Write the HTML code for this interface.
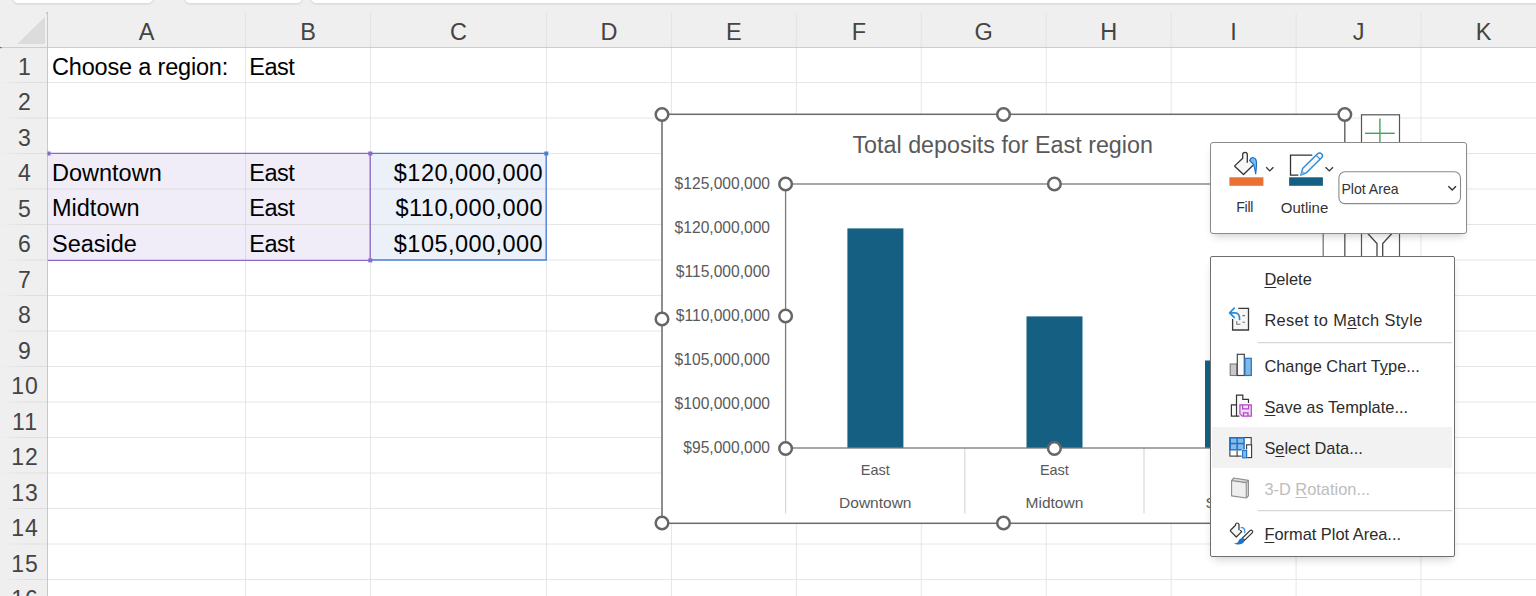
<!DOCTYPE html><html><head><meta charset="utf-8"><style>
*{box-sizing:border-box;margin:0;padding:0}
html,body{width:1536px;height:596px;overflow:hidden;background:#fff;font-family:"Liberation Sans", sans-serif}
.a{position:absolute}
.t{position:absolute;white-space:nowrap;line-height:1}
</style></head><body>
<div class="a" style="left:0;top:0;width:1536px;height:47px;background:#efefef"></div><div class="a" style="left:0;top:47px;width:47px;height:549px;background:#efefef"></div><div class="a" style="left:12px;top:-20px;width:142px;height:24px;background:#fff;border:1px solid #dedede;border-radius:6px;box-shadow:0 1px 1px rgba(0,0,0,0.06)"></div><div class="a" style="left:184px;top:-20px;width:119px;height:24px;background:#fff;border:1px solid #dedede;border-radius:6px;box-shadow:0 1px 1px rgba(0,0,0,0.06)"></div><div class="a" style="left:310px;top:-20px;width:1250px;height:24px;background:#fff;border:1px solid #dedede;border-radius:6px;box-shadow:0 1px 1px rgba(0,0,0,0.06)"></div><svg class="a" style="left:0;top:0" width="48" height="48"><polygon points="17,44 45,44 45,17" fill="#dcdcdc"/><rect x="46.5" y="12.5" width="1.2" height="1.2" fill="#777"/></svg><svg class="a" style="left:0;top:0" width="1536" height="596"><defs><linearGradient id="rg" gradientUnits="userSpaceOnUse" x1="0" y1="0" x2="47" y2="0"><stop offset="0" stop-color="#efefef"/><stop offset="0.5" stop-color="#e0e0e0"/><stop offset="1" stop-color="#dedede"/></linearGradient></defs><line x1="48" y1="82.5" x2="1536" y2="82.5" stroke="#e6e6e6" stroke-width="1"/><line x1="0" y1="82.5" x2="47" y2="82.5" stroke="url(#rg)" stroke-width="1"/><line x1="48" y1="118.0" x2="1536" y2="118.0" stroke="#e6e6e6" stroke-width="1"/><line x1="0" y1="118.0" x2="47" y2="118.0" stroke="url(#rg)" stroke-width="1"/><line x1="48" y1="153.5" x2="1536" y2="153.5" stroke="#e6e6e6" stroke-width="1"/><line x1="0" y1="153.5" x2="47" y2="153.5" stroke="url(#rg)" stroke-width="1"/><line x1="48" y1="189.0" x2="1536" y2="189.0" stroke="#e6e6e6" stroke-width="1"/><line x1="0" y1="189.0" x2="47" y2="189.0" stroke="url(#rg)" stroke-width="1"/><line x1="48" y1="224.5" x2="1536" y2="224.5" stroke="#e6e6e6" stroke-width="1"/><line x1="0" y1="224.5" x2="47" y2="224.5" stroke="url(#rg)" stroke-width="1"/><line x1="48" y1="260.0" x2="1536" y2="260.0" stroke="#e6e6e6" stroke-width="1"/><line x1="0" y1="260.0" x2="47" y2="260.0" stroke="url(#rg)" stroke-width="1"/><line x1="48" y1="295.5" x2="1536" y2="295.5" stroke="#e6e6e6" stroke-width="1"/><line x1="0" y1="295.5" x2="47" y2="295.5" stroke="url(#rg)" stroke-width="1"/><line x1="48" y1="331.0" x2="1536" y2="331.0" stroke="#e6e6e6" stroke-width="1"/><line x1="0" y1="331.0" x2="47" y2="331.0" stroke="url(#rg)" stroke-width="1"/><line x1="48" y1="366.5" x2="1536" y2="366.5" stroke="#e6e6e6" stroke-width="1"/><line x1="0" y1="366.5" x2="47" y2="366.5" stroke="url(#rg)" stroke-width="1"/><line x1="48" y1="402.0" x2="1536" y2="402.0" stroke="#e6e6e6" stroke-width="1"/><line x1="0" y1="402.0" x2="47" y2="402.0" stroke="url(#rg)" stroke-width="1"/><line x1="48" y1="437.5" x2="1536" y2="437.5" stroke="#e6e6e6" stroke-width="1"/><line x1="0" y1="437.5" x2="47" y2="437.5" stroke="url(#rg)" stroke-width="1"/><line x1="48" y1="473.0" x2="1536" y2="473.0" stroke="#e6e6e6" stroke-width="1"/><line x1="0" y1="473.0" x2="47" y2="473.0" stroke="url(#rg)" stroke-width="1"/><line x1="48" y1="508.5" x2="1536" y2="508.5" stroke="#e6e6e6" stroke-width="1"/><line x1="0" y1="508.5" x2="47" y2="508.5" stroke="url(#rg)" stroke-width="1"/><line x1="48" y1="544.0" x2="1536" y2="544.0" stroke="#e6e6e6" stroke-width="1"/><line x1="0" y1="544.0" x2="47" y2="544.0" stroke="url(#rg)" stroke-width="1"/><line x1="48" y1="579.5" x2="1536" y2="579.5" stroke="#e6e6e6" stroke-width="1"/><line x1="0" y1="579.5" x2="47" y2="579.5" stroke="url(#rg)" stroke-width="1"/><line x1="48" y1="615.0" x2="1536" y2="615.0" stroke="#e6e6e6" stroke-width="1"/><line x1="0" y1="615.0" x2="47" y2="615.0" stroke="url(#rg)" stroke-width="1"/><line x1="245.5" y1="48" x2="245.5" y2="596" stroke="#e6e6e6" stroke-width="1"/><line x1="245.5" y1="13" x2="245.5" y2="47" stroke="#e3e3e3" stroke-width="1"/><line x1="370.5" y1="48" x2="370.5" y2="596" stroke="#e6e6e6" stroke-width="1"/><line x1="370.5" y1="13" x2="370.5" y2="47" stroke="#e3e3e3" stroke-width="1"/><line x1="546.5" y1="48" x2="546.5" y2="596" stroke="#e6e6e6" stroke-width="1"/><line x1="546.5" y1="13" x2="546.5" y2="47" stroke="#e3e3e3" stroke-width="1"/><line x1="671.4300000000001" y1="48" x2="671.4300000000001" y2="596" stroke="#e6e6e6" stroke-width="1"/><line x1="671.4300000000001" y1="13" x2="671.4300000000001" y2="47" stroke="#e3e3e3" stroke-width="1"/><line x1="796.36" y1="48" x2="796.36" y2="596" stroke="#e6e6e6" stroke-width="1"/><line x1="796.36" y1="13" x2="796.36" y2="47" stroke="#e3e3e3" stroke-width="1"/><line x1="921.29" y1="48" x2="921.29" y2="596" stroke="#e6e6e6" stroke-width="1"/><line x1="921.29" y1="13" x2="921.29" y2="47" stroke="#e3e3e3" stroke-width="1"/><line x1="1046.22" y1="48" x2="1046.22" y2="596" stroke="#e6e6e6" stroke-width="1"/><line x1="1046.22" y1="13" x2="1046.22" y2="47" stroke="#e3e3e3" stroke-width="1"/><line x1="1171.15" y1="48" x2="1171.15" y2="596" stroke="#e6e6e6" stroke-width="1"/><line x1="1171.15" y1="13" x2="1171.15" y2="47" stroke="#e3e3e3" stroke-width="1"/><line x1="1296.08" y1="48" x2="1296.08" y2="596" stroke="#e6e6e6" stroke-width="1"/><line x1="1296.08" y1="13" x2="1296.08" y2="47" stroke="#e3e3e3" stroke-width="1"/><line x1="1421.01" y1="48" x2="1421.01" y2="596" stroke="#e6e6e6" stroke-width="1"/><line x1="1421.01" y1="13" x2="1421.01" y2="47" stroke="#e3e3e3" stroke-width="1"/><line x1="0" y1="47.5" x2="1536" y2="47.5" stroke="#cdcdcd" stroke-width="1"/><line x1="47.5" y1="13" x2="47.5" y2="596" stroke="#c8c8c8" stroke-width="1"/><rect x="0" y="47" width="1.5" height="1.2" fill="#666"/></svg><div class="t" style="left:106.5px;width:80px;text-align:center;top:21px;font-size:23.5px;color:#444">A</div><div class="t" style="left:268.0px;width:80px;text-align:center;top:21px;font-size:23.5px;color:#444">B</div><div class="t" style="left:418.5px;width:80px;text-align:center;top:21px;font-size:23.5px;color:#444">C</div><div class="t" style="left:568.965px;width:80px;text-align:center;top:21px;font-size:23.5px;color:#444">D</div><div class="t" style="left:693.895px;width:80px;text-align:center;top:21px;font-size:23.5px;color:#444">E</div><div class="t" style="left:818.825px;width:80px;text-align:center;top:21px;font-size:23.5px;color:#444">F</div><div class="t" style="left:943.755px;width:80px;text-align:center;top:21px;font-size:23.5px;color:#444">G</div><div class="t" style="left:1068.685px;width:80px;text-align:center;top:21px;font-size:23.5px;color:#444">H</div><div class="t" style="left:1193.615px;width:80px;text-align:center;top:21px;font-size:23.5px;color:#444">I</div><div class="t" style="left:1318.545px;width:80px;text-align:center;top:21px;font-size:23.5px;color:#444">J</div><div class="t" style="left:1443.475px;width:80px;text-align:center;top:21px;font-size:23.5px;color:#444">K</div><div class="t" style="left:0;width:47px;text-align:center;top:55.5px;font-size:23px;color:#444;letter-spacing:1px;padding-left:3px">1</div><div class="t" style="left:0;width:47px;text-align:center;top:91.0px;font-size:23px;color:#444;letter-spacing:1px;padding-left:3px">2</div><div class="t" style="left:0;width:47px;text-align:center;top:126.5px;font-size:23px;color:#444;letter-spacing:1px;padding-left:3px">3</div><div class="t" style="left:0;width:47px;text-align:center;top:162.0px;font-size:23px;color:#444;letter-spacing:1px;padding-left:3px">4</div><div class="t" style="left:0;width:47px;text-align:center;top:197.5px;font-size:23px;color:#444;letter-spacing:1px;padding-left:3px">5</div><div class="t" style="left:0;width:47px;text-align:center;top:233.0px;font-size:23px;color:#444;letter-spacing:1px;padding-left:3px">6</div><div class="t" style="left:0;width:47px;text-align:center;top:268.5px;font-size:23px;color:#444;letter-spacing:1px;padding-left:3px">7</div><div class="t" style="left:0;width:47px;text-align:center;top:304.0px;font-size:23px;color:#444;letter-spacing:1px;padding-left:3px">8</div><div class="t" style="left:0;width:47px;text-align:center;top:339.5px;font-size:23px;color:#444;letter-spacing:1px;padding-left:3px">9</div><div class="t" style="left:0;width:47px;text-align:center;top:375.0px;font-size:23px;color:#444;letter-spacing:1px;padding-left:3px">10</div><div class="t" style="left:0;width:47px;text-align:center;top:410.5px;font-size:23px;color:#444;letter-spacing:1px;padding-left:3px">11</div><div class="t" style="left:0;width:47px;text-align:center;top:446.0px;font-size:23px;color:#444;letter-spacing:1px;padding-left:3px">12</div><div class="t" style="left:0;width:47px;text-align:center;top:481.5px;font-size:23px;color:#444;letter-spacing:1px;padding-left:3px">13</div><div class="t" style="left:0;width:47px;text-align:center;top:517.0px;font-size:23px;color:#444;letter-spacing:1px;padding-left:3px">14</div><div class="t" style="left:0;width:47px;text-align:center;top:552.5px;font-size:23px;color:#444;letter-spacing:1px;padding-left:3px">15</div><div class="t" style="left:0;width:47px;text-align:center;top:588.0px;font-size:23px;color:#444;letter-spacing:1px;padding-left:3px">16</div><div class="a" style="left:48px;top:154px;width:322px;height:106px;background:#f0edf8"></div><div class="a" style="left:371px;top:154px;width:175px;height:106px;background:#ebf0f9"></div><svg class="a" style="left:0;top:0" width="600" height="300"><line x1="48" y1="189" x2="546" y2="189" stroke="#dcdcdc"/><line x1="48" y1="224.5" x2="546" y2="224.5" stroke="#dcdcdc"/><line x1="245.5" y1="154" x2="245.5" y2="260" stroke="#dcdcdc"/><path d="M48 153.3 H370.2 V260.4 H48" fill="none" stroke="#8c69c8" stroke-width="1.35"/><path d="M372 153.3 H546.2 V260 H372" fill="none" stroke="#4a7fd4" stroke-width="1.35"/><rect x="368.3" y="151.5" width="4" height="4" fill="#8c69c8"/><rect x="368.3" y="258.4" width="4" height="4" fill="#8c69c8"/><rect x="47.5" y="151.5" width="3" height="4" fill="#8c69c8"/><rect x="544.3" y="151.5" width="4" height="4" fill="#4a7fd4"/></svg><div class="t" style="left:52px;top:55.91px;font-size:23.5px;color:#000;letter-spacing:-0.18px">Choose a region:</div><div class="t" style="left:249.3px;top:55.91px;font-size:23.5px;color:#000;letter-spacing:-0.5px">East</div><div class="t" style="left:52px;top:161.61px;font-size:23.5px;color:#000">Downtown</div><div class="t" style="left:249.3px;top:161.61px;font-size:23.5px;color:#000;letter-spacing:-0.5px">East</div><div class="t" style="right:993px;top:161.61px;font-size:23.5px;color:#000;letter-spacing:0.45px">$120,000,000</div><div class="t" style="left:52px;top:197.11px;font-size:23.5px;color:#000">Midtown</div><div class="t" style="left:249.3px;top:197.11px;font-size:23.5px;color:#000;letter-spacing:-0.5px">East</div><div class="t" style="right:993px;top:197.11px;font-size:23.5px;color:#000;letter-spacing:0.45px">$110,000,000</div><div class="t" style="left:52px;top:232.61px;font-size:23.5px;color:#000">Seaside</div><div class="t" style="left:249.3px;top:232.61px;font-size:23.5px;color:#000;letter-spacing:-0.5px">East</div><div class="t" style="right:993px;top:232.61px;font-size:23.5px;color:#000;letter-spacing:0.45px">$105,000,000</div><div class="a" style="left:662px;top:114px;width:683px;height:409px;background:#fff"></div><svg class="a" style="left:0;top:0" width="1536" height="596"><line x1="785.6" y1="448" x2="785.6" y2="513.5" stroke="#d9d9d9" stroke-width="1.2"/><line x1="964.8" y1="448" x2="964.8" y2="513.5" stroke="#d9d9d9" stroke-width="1.2"/><line x1="1144.0" y1="448" x2="1144.0" y2="513.5" stroke="#d9d9d9" stroke-width="1.2"/><line x1="1323.2" y1="448" x2="1323.2" y2="513.5" stroke="#d9d9d9" stroke-width="1.2"/><rect x="847.4" y="228.4" width="56" height="219.6" fill="#156082"/><rect x="1026.5" y="316.4" width="56" height="131.60000000000002" fill="#156082"/><rect x="1205" y="360.5" width="56" height="87.5" fill="#156082"/><rect x="785.6" y="184" width="537.6" height="264" fill="none" stroke="#7a7a7a" stroke-width="1.3"/><rect x="662" y="114.3" width="682.8" height="409" fill="none" stroke="#6a6a6a" stroke-width="1.5"/><circle cx="662" cy="114.5" r="6.3" fill="#fff" stroke="#666" stroke-width="2.5"/><circle cx="1003.5" cy="114.5" r="6.3" fill="#fff" stroke="#666" stroke-width="2.5"/><circle cx="1344.8" cy="114.5" r="6.3" fill="#fff" stroke="#666" stroke-width="2.5"/><circle cx="662" cy="319" r="6.3" fill="#fff" stroke="#666" stroke-width="2.5"/><circle cx="662" cy="523" r="6.3" fill="#fff" stroke="#666" stroke-width="2.5"/><circle cx="1003.5" cy="523" r="6.3" fill="#fff" stroke="#666" stroke-width="2.5"/><circle cx="785.6" cy="184" r="6.3" fill="#fff" stroke="#666" stroke-width="2.5"/><circle cx="1054.4" cy="184" r="6.3" fill="#fff" stroke="#666" stroke-width="2.5"/><circle cx="785.6" cy="316" r="6.3" fill="#fff" stroke="#666" stroke-width="2.5"/><circle cx="785.6" cy="448.5" r="6.3" fill="#fff" stroke="#666" stroke-width="2.5"/><circle cx="1054.4" cy="448.5" r="6.3" fill="#fff" stroke="#666" stroke-width="2.5"/></svg><div class="t" style="left:702.7px;width:600px;text-align:center;top:133.88px;font-size:23.3px;color:#595959">Total deposits for East region</div><div class="t" style="right:766px;top:176.49px;font-size:15.6px;color:#595959">$125,000,000</div><div class="t" style="right:766px;top:220.49px;font-size:15.6px;color:#595959">$120,000,000</div><div class="t" style="right:766px;top:264.49px;font-size:15.6px;color:#595959">$115,000,000</div><div class="t" style="right:766px;top:308.49px;font-size:15.6px;color:#595959">$110,000,000</div><div class="t" style="right:766px;top:352.49px;font-size:15.6px;color:#595959">$105,000,000</div><div class="t" style="right:766px;top:396.49px;font-size:15.6px;color:#595959">$100,000,000</div><div class="t" style="right:766px;top:440.49px;font-size:15.6px;color:#595959">$95,000,000</div><div class="t" style="left:575.3px;width:600px;text-align:center;top:463.03px;font-size:14.5px;color:#595959">East</div><div class="t" style="left:575.3px;width:600px;text-align:center;top:495.28px;font-size:15.5px;color:#595959">Downtown</div><div class="t" style="left:754.4000000000001px;width:600px;text-align:center;top:463.03px;font-size:14.5px;color:#595959">East</div><div class="t" style="left:754.4000000000001px;width:600px;text-align:center;top:495.28px;font-size:15.5px;color:#595959">Midtown</div><div class="t" style="left:933.5999999999999px;width:600px;text-align:center;top:463.03px;font-size:14.5px;color:#595959">East</div><div class="t" style="left:933.5999999999999px;width:600px;text-align:center;top:495.28px;font-size:15.5px;color:#595959">Seaside</div><svg class="a" style="left:0;top:0" width="1536" height="596"><rect x="1361.5" y="114.8" width="38" height="150" fill="#fff" stroke="#555" stroke-width="1.2"/><line x1="1365" y1="133.3" x2="1394.7" y2="133.3" stroke="#3ea559" stroke-width="1.4"/><line x1="1379.9" y1="118.6" x2="1379.9" y2="148" stroke="#3ea559" stroke-width="1.4"/><path d="M1367.3 233 L1377 243.6 V256 M1392.4 233 L1382.7 243.6 V256" fill="none" stroke="#444" stroke-width="1.3"/></svg><div class="a" style="left:1209.7px;top:142.2px;width:257px;height:92px;background:#fff;border:1.2px solid #8a8a8a;border-radius:3px;box-shadow:0 5px 8px -3px rgba(0,0,0,0.2)"></div><svg class="a" style="left:0;top:0" width="1536" height="596"><path d="M1234.4 166.1 L1243.5 174.5 L1254.1 164.3 L1248.8 159.3 L1247.3 160.7 V154.6 A2.3 2.3 0 0 0 1242.7 154.6 V158.2 Z" fill="#f7f7f7" stroke="none" stroke="#333" stroke-width="1.3" stroke-linejoin="round"/><path d="M1234.4 166.1 L1242.7 158.2 V154.6 A2.3 2.3 0 0 1 1247.3 154.6 V162.7 M1234.4 166.1 L1243.5 174.5 L1254.1 164.3 L1249.6 160.1" fill="none" stroke="#333" stroke-width="1.3" stroke-linejoin="round"/><path d="M1249.8 160.5 C1251 156.5 1255.8 156.8 1256.4 161.5 C1256.8 165 1256.2 169 1255.7 173.8 C1254.8 169 1254.3 166.5 1253.5 164.4 Z" fill="#7dbbef" stroke="#1b73c9" stroke-width="1.2" stroke-linejoin="round"/><rect x="1229.4" y="177.3" width="34" height="8.5" fill="#e97132"/><path d="M1266.2 167.3 L1269.8 170.9 L1273.4 167.3" fill="none" stroke="#333" stroke-width="1.3"/><path d="M1312.3 155.1 H1290.5 V175.2 H1298.4" fill="none" stroke="#333" stroke-width="1.3"/><path d="M1300.8 175.2 L1302.6 168.6 L1317.6 153.8 A2.6 2.6 0 0 1 1321.6 157.8 L1306.6 172.6 Z" fill="#f7f7f7" stroke="#2b8ad6" stroke-width="1.4" stroke-linejoin="round"/><path d="M1300.8 175.2 L1302.2 170.2 L1304.6 172.8 Z" fill="#7dbbef"/><line x1="1316.2" y1="155.4" x2="1320" y2="159.2" stroke="#2b8ad6" stroke-width="1.2"/><rect x="1289.1" y="177.3" width="33.8" height="8.5" fill="#156082"/><path d="M1325.6 167.3 L1329.3 170.9 L1333 167.3" fill="none" stroke="#333" stroke-width="1.3"/><rect x="1338.9" y="171.8" width="121.6" height="31.8" rx="6" fill="#fff" stroke="#8a8a8a" stroke-width="1.1"/><path d="M1448.4 186.2 L1452.2 190 L1456 186.2" fill="none" stroke="#333" stroke-width="1.4"/></svg><div class="t" style="left:944.7px;width:600px;text-align:center;top:200.18px;font-size:14.2px;color:#333;letter-spacing:-0.3px">Fill</div><div class="t" style="left:1004.5px;width:600px;text-align:center;top:199.50px;font-size:15px;color:#333">Outline</div><div class="t" style="left:1341.4px;top:181.96px;font-size:14.1px;color:#333">Plot Area</div><div class="a" style="left:1210px;top:255.9px;width:244.5px;height:301px;background:#fff;border:1.2px solid #6e6e6e;border-radius:2px;box-shadow:0 5px 9px -3px rgba(0,0,0,0.2)"></div><div class="a" style="left:1212px;top:427.2px;width:240px;height:40.4px;background:#f2f2f2"></div><svg class="a" style="left:0;top:0" width="1536" height="596"><line x1="1258" y1="342.6" x2="1452" y2="342.6" stroke="#d6d6d6" stroke-width="1.2"/><line x1="1257.6" y1="510.7" x2="1452" y2="510.7" stroke="#d6d6d6" stroke-width="1.2"/><path d="M1238.3 308.4 H1248.5 V330 H1232.6 V319" fill="#f6f6f6" stroke="#3a3a3a" stroke-width="1.3"/><path d="M1242.4 315.6 H1245 M1242.4 322.3 H1245 M1236.8 321 V324.2 H1240.4" fill="none" stroke="#777" stroke-width="1.1"/><path d="M1234.2 308.2 L1229.6 312.8 L1234.2 317.4 M1229.8 312.8 H1235 C1238 312.8 1239.8 315 1239.6 319.4" fill="none" stroke="#2b8ad6" stroke-width="1.7" stroke-linecap="round" stroke-linejoin="round"/><rect x="1230.2" y="364" width="6.6" height="11.5" fill="#c9c9c9" stroke="#7a7a7a" stroke-width="1.1"/><rect x="1237.3" y="354.3" width="7" height="21.2" fill="#fafafa" stroke="#444" stroke-width="1.2"/><rect x="1244.9" y="358.3" width="6.4" height="17.2" fill="#80b8ea" stroke="#1f73c4" stroke-width="1.2"/><path d="M1239.4 416.2 H1231.4 V404.8 H1236.5 V395.1 H1242.8 V399.4 H1248.5 V403" fill="#fafafa" stroke="#333" stroke-width="1.2"/><line x1="1236.5" y1="404.8" x2="1236.5" y2="416.2" stroke="#333" stroke-width="1.2"/><path d="M1239.9 404.9 H1251.3 V416.1 H1242.2 L1239.9 413.8 Z" fill="#f3dcf7" stroke="#b146c2" stroke-width="1.2"/><path d="M1242.6 404.9 V408.8 H1248.6 V404.9 M1243.4 416 V412.8 H1248 V416" fill="none" stroke="#b146c2" stroke-width="1.2"/><rect x="1229.9" y="437.6" width="21.3" height="18.5" fill="#fff" stroke="#3a3a3a" stroke-width="1.1"/><rect x="1229.4" y="437.1" width="15.4" height="13.4" fill="#1f73c4"/><rect x="1231" y="438.6" width="5.4" height="4.2" fill="#86bcec"/><rect x="1237.9" y="438.6" width="5.4" height="4.2" fill="#86bcec"/><rect x="1231" y="444.3" width="5.4" height="4.8" fill="#86bcec"/><rect x="1237.9" y="444.3" width="5.4" height="4.8" fill="#86bcec"/><line x1="1237.1" y1="450.5" x2="1237.1" y2="456.5" stroke="#3a3a3a" stroke-width="1.1"/><rect x="1246.6" y="444.8" width="5" height="12.8" fill="#fff" stroke="#3a3a3a" stroke-width="1.1"/><rect x="1241.6" y="449.3" width="5.6" height="9.2" fill="#f2f2f2"/><rect x="1242.6" y="450.4" width="3.9" height="7.4" fill="#86bcec" stroke="#1f73c4" stroke-width="1.1"/><path d="M1231.6 480.6 L1233.8 478 L1248.4 480.4 V495.8 L1246.2 498 L1231.6 495.8 Z" fill="#dedede" stroke="#8f8f8f" stroke-width="1.2" stroke-linejoin="round"/><path d="M1231.6 480.6 L1246.2 482.6 V498 M1246.2 482.6 L1248.4 480.4" fill="none" stroke="#8f8f8f" stroke-width="1.1"/><path d="M1232.4 481.6 L1245.4 483.4 V497 L1232.4 495 Z" fill="#efefef"/><path d="M1230 530.7 L1236.3 537 L1241.7 531.6 L1239 528.9 V524.4 A1.8 1.8 0 0 0 1235.5 524.4 V525.4 Z" fill="#f7f7f7" stroke="none" stroke-width="1.2" stroke-linejoin="round"/><path d="M1230 530.7 L1235.5 525.3 V524.4 A1.8 1.8 0 0 1 1239 524.4 V530.2 M1230 530.7 L1236.3 537 L1241.7 531.6 L1240.2 530.1" fill="none" stroke="#333" stroke-width="1.2" stroke-linejoin="round"/><path d="M1241.3 527.6 C1243.5 527 1245.5 529.5 1244.6 532.6" fill="none" stroke="#4a9be0" stroke-width="1.5" stroke-linecap="round"/><path d="M1242.2 538.2 L1250 530.6 A1.4 1.4 0 0 1 1252.2 532.8 L1244.4 540.4 Z" fill="#fafafa" stroke="#333" stroke-width="1.2" stroke-linejoin="round"/><path d="M1242.6 538 C1240 537.8 1238.6 540.2 1238 542 C1237 543.2 1235.5 543.4 1233.8 543.2 C1236.6 545 1241.4 545 1243.6 542.6 C1244.6 541.4 1244.6 539.6 1244.2 539.4 Z" fill="#1f73c4"/></svg><div class="t" style="left:1264.4px;top:271.42px;font-size:16.4px;color:#2b2b2b;text-decoration-thickness:1px;text-underline-offset:2px"><u>D</u>elete</div><div class="t" style="left:1264.4px;top:312.12px;font-size:16.4px;color:#2b2b2b;letter-spacing:0.35px;text-decoration-thickness:1px;text-underline-offset:2px">Reset to M<u>a</u>tch Style</div><div class="t" style="left:1264.4px;top:358.12px;font-size:16.4px;color:#2b2b2b;text-decoration-thickness:1px;text-underline-offset:2px">Change Chart T<u>y</u>pe...</div><div class="t" style="left:1264.4px;top:398.92px;font-size:16.4px;color:#2b2b2b;text-decoration-thickness:1px;text-underline-offset:2px"><u>S</u>ave as Template...</div><div class="t" style="left:1264.4px;top:440.32px;font-size:16.4px;color:#2b2b2b;text-decoration-thickness:1px;text-underline-offset:2px">S<u>e</u>lect Data...</div><div class="t" style="left:1264.4px;top:480.82px;font-size:16.4px;color:#bdbdbd;text-decoration-thickness:1px;text-underline-offset:2px">3-D <u>R</u>otation...</div><div class="t" style="left:1264.4px;top:526.42px;font-size:16.4px;color:#2b2b2b;text-decoration-thickness:1px;text-underline-offset:2px"><u>F</u>ormat Plot Area...</div></body></html>
